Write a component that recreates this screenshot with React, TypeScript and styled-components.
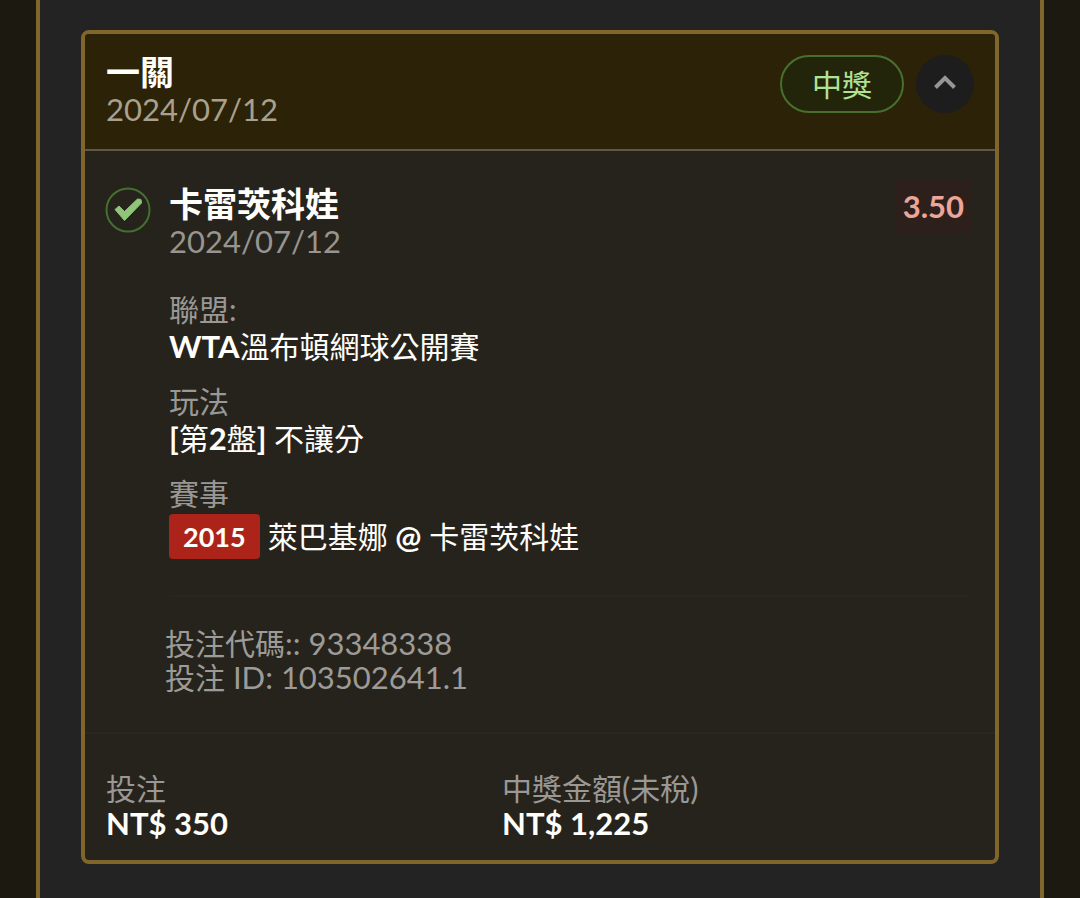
import React, { useState } from 'react';
import styled, { createGlobalStyle } from 'styled-components';

const GlobalStyle = createGlobalStyle`
  * { box-sizing: border-box; }
  body {
    margin: 0;
    background: #1c1911;
    color: #fffefa;
    font-family: Lato, "Noto Sans CJK TC", sans-serif;
    font-size: 30px;
    line-height: 34px;
  }
  h2, h3, p, dl, dd, dt { margin: 0; font-weight: 400; }
`;

const Page = styled.main`
  min-height: 100vh;
  padding: 0 36px;
`;

const Frame = styled.div`
  min-height: 100vh;
  padding: 30px 41px;
  border: solid #80662a;
  border-width: 0 4px;
  background: #232323;
`;

const Card = styled.article`
  overflow: hidden;
  border: 4px solid #80662a;
  border-radius: 8px;
  background: #26231d;
`;

const CardHeader = styled.header`
  display: flex;
  justify-content: space-between;
  align-items: flex-start;
  padding: 20px 21px 21px;
  border-bottom: 2px solid #5d584a;
  background: #2c2208;
`;

const Title = styled.h2`
  font-size: 34px;
  font-weight: 700;
  line-height: 36px;
`;

const DateText = styled.p<{ $warm?: boolean }>`
  color: ${(p) => (p.$warm ? '#a9a18c' : '#979591')};
  font-size: 31px;
  line-height: 38px;
`;

const HeaderActions = styled.div`
  display: flex;
  gap: 12px;
  padding-top: 1px;
`;

const StatusPill = styled.span`
  display: flex;
  align-items: center;
  justify-content: center;
  width: 124px;
  height: 58px;
  border: 2px solid #47702e;
  border-radius: 29px;
  background: #23250b;
  color: #b0e296;
`;

const ToggleButton = styled.button`
  display: flex;
  align-items: center;
  justify-content: center;
  width: 58px;
  height: 58px;
  padding: 0;
  border: 0;
  border-radius: 50%;
  background: #1d1d1e;
  color: #969696;
  cursor: pointer;
`;

const Selection = styled.section`
  display: grid;
  grid-template-columns: 46px 1fr;
  column-gap: 18px;
  padding: 28px 27px 38px 20px;
`;

const CheckMark = styled.svg`
  width: 46px;
  height: 46px;
  margin-top: 8px;
`;

const SelectionHead = styled.div`
  display: flex;
  justify-content: space-between;
  align-items: flex-start;
`;

const SelectionName = styled.div`
  padding-top: 7px;
`;

const Odds = styled.strong`
  margin-right: -4px;
  padding: 8px;
  border-radius: 4px;
  background: #2d201a;
  color: #eda59b;
  font-size: 31px;
  line-height: 38px;
`;

const Details = styled.dl`
  display: grid;
  row-gap: 18px;
  padding: 31px 0 36px;
  border-bottom: 2px solid #282622;
`;

const Label = styled.dt`
  color: #9a9894;
  line-height: 37px;
`;

const Value = styled.dd<{ $badge?: boolean }>`
  display: flex;
  align-items: center;
  padding-top: ${(p) => (p.$badge ? 2 : 0)}px;
  line-height: 37px;
  white-space: pre;
`;

const Latin = styled.span<{ $bold?: boolean }>`
  font-size: 31px;
  font-weight: ${(p) => (p.$bold ? 700 : 400)};
`;

const MatchCode = styled.span`
  margin-right: 8px;
  padding: 4px 14px;
  border-radius: 4px;
  background: #ac2419;
  font-size: 27px;
  font-weight: 700;
`;

const BetCodes = styled.div`
  margin-left: -4px;
  padding-top: 29px;
  color: #9d9b97;
`;

const Totals = styled.dl`
  display: grid;
  grid-template-columns: 396px 1fr;
  padding: 37px 21px 20px;
  border-top: 2px solid #292722;
`;

const TotalLabel = styled.dt`
  color: #9a9894;
  line-height: 35px;
`;

const Amount = styled.dd`
  font-size: 31px;
  font-weight: 700;
`;

export default function App() {
  const [open, setOpen] = useState(true);

  return (
    <>
      <GlobalStyle />
      <Page>
        <Frame>
          <Card>
            <CardHeader>
              <div>
                <Title>一關</Title>
                <DateText $warm>2024/07/12</DateText>
              </div>
              <HeaderActions>
                <StatusPill>中獎</StatusPill>
                <ToggleButton
                  type="button"
                  aria-label="收合"
                  aria-expanded={open}
                  onClick={() => setOpen(!open)}
                >
                  <svg width="24" height="18" viewBox="0 0 24 18" fill="none" aria-hidden="true">
                    <path d="M2.5 12.5 12 3l9.500 9.500" stroke="currentColor" strokeWidth="4" />
                  </svg>
                </ToggleButton>
              </HeaderActions>
            </CardHeader>
            {open && (
              <Selection>
                <CheckMark viewBox="0 0 46 46" fill="none" aria-hidden="true">
                  <circle cx="23" cy="23" r="21.5" stroke="#447030" strokeWidth="2" />
                  <path d="M10 22.500 14 19 19.500 24.500 32.500 12 36 12.500 36.500 16 19.500 33.500Z" fill="#8fc578" stroke="#8fc578" strokeWidth="1" strokeLinejoin="round" />
                </CheckMark>
                <div>
                  <SelectionHead>
                    <SelectionName>
                      <Title as="h3">卡雷茨科娃</Title>
                      <DateText>2024/07/12</DateText>
                    </SelectionName>
                    <Odds>3.50</Odds>
                  </SelectionHead>
                  <Details>
                    <div>
                      <Label>聯盟:</Label>
                      <Value><Latin $bold>WTA</Latin>溫布頓網球公開賽</Value>
                    </div>
                    <div>
                      <Label>玩法</Label>
                      <Value>
                        <Latin $bold>[</Latin>第<Latin $bold>2</Latin>盤<Latin $bold>]</Latin> 不讓分
                      </Value>
                    </div>
                    <div>
                      <Label>賽事</Label>
                      <Value $badge>
                        <MatchCode>2015</MatchCode>萊巴基娜 <Latin $bold>@</Latin> 卡雷茨科娃
                      </Value>
                    </div>
                  </Details>
                  <BetCodes>
                    <p>投注代碼<Latin>:: 93348338</Latin></p>
                    <p>投注<Latin> ID: 103502641.1</Latin></p>
                  </BetCodes>
                </div>
              </Selection>
            )}
            <Totals>
              <div>
                <TotalLabel>投注</TotalLabel>
                <Amount>NT$ 350</Amount>
              </div>
              <div>
                <TotalLabel>中獎金額<Latin>(</Latin>未稅<Latin>)</Latin></TotalLabel>
                <Amount>NT$ 1,225</Amount>
              </div>
            </Totals>
          </Card>
        </Frame>
      </Page>
    </>
  );
}
